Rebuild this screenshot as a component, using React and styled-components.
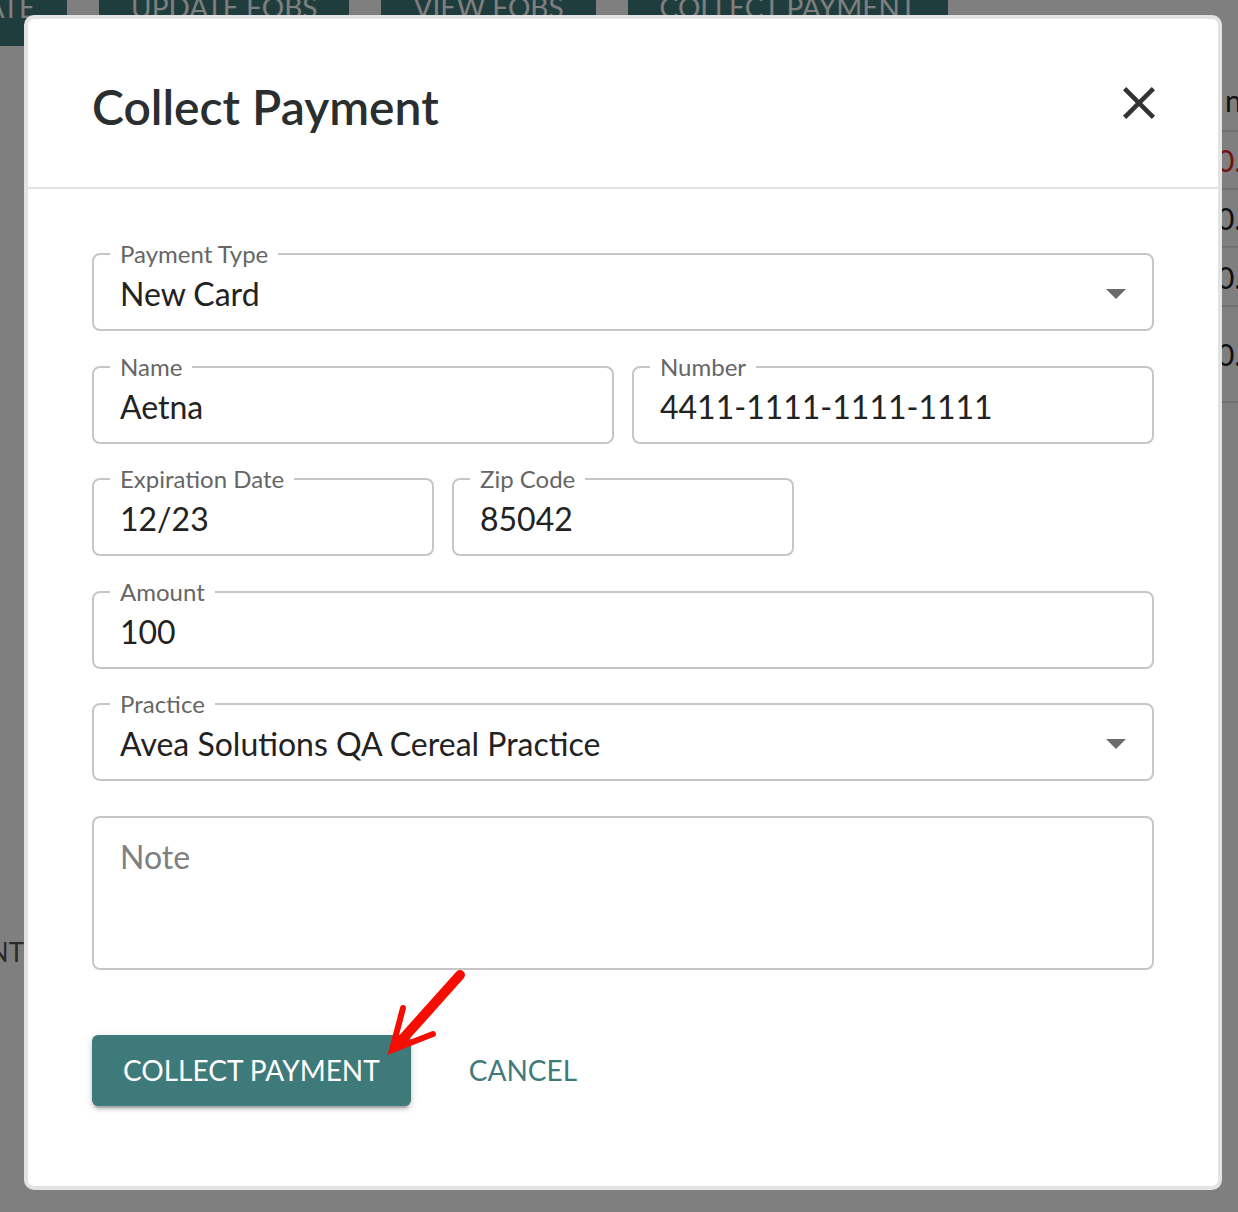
import React from "react";
import styled, { createGlobalStyle } from "styled-components";

const GlobalStyle = createGlobalStyle`
  html, body { margin: 0; padding: 0; }
  body {
    font-family: Lato, "Noto Sans", sans-serif;
    background: #ffffff;
    overflow: hidden;
  }
  * { box-sizing: border-box; }
`;

const Page = styled.div`
  position: relative;
  width: 1238px;
  height: 1212px;
  overflow: hidden;
  background: #ffffff;
`;

const Toolbar = styled.div`
  display: flex;
  gap: 32px;
  margin-top: -18px;
  margin-left: -163px;
`;

const ToolButton = styled.div`
  flex: none;
  height: 64px;
  padding: 0 32px 14px;
  display: flex;
  align-items: center;
  background: #3e7a7a;
  color: #ffffff;
  font-size: 28px;
  border-radius: 6px;
  white-space: nowrap;
`;

const PageBody = styled.div`
  display: flex;
  justify-content: space-between;
`;

const LeftStrip = styled.div`
  width: 24px;
  padding-top: 890px;
  display: flex;
  justify-content: flex-end;
  font-size: 26px;
  line-height: 32px;
  color: #555;
  white-space: nowrap;
`;

const RightTable = styled.div`
  width: 21px;
  margin-top: 24px;
`;

const TableRow = styled.div`
  height: ${(p) => p.$h}px;
  display: flex;
  align-items: center;
  padding-left: ${(p) => (p.$head ? 8 : 0)}px;
  white-space: nowrap;
  font-size: 30px;
  color: ${(p) => (p.$red ? "#e0261c" : "#222")};
  border-bottom: 2px solid #e0e0e0;
`;

const Overlay = styled.div`
  position: absolute;
  inset: 0;
  background: rgba(0, 0, 0, 0.5);
`;

const Modal = styled.div`
  position: absolute;
  left: 24px;
  top: 15px;
  width: 1198px;
  height: 1175px;
  background: #ffffff;
  border: 4px solid #e3e3e3;
  border-radius: 10px;
  display: flex;
  flex-direction: column;
`;

const Header = styled.header`
  flex: none;
  height: 170px;
  border-bottom: 2px solid #e2e2e2;
  display: flex;
  align-items: center;
  justify-content: space-between;
  padding: 0 63px 0 64px;
`;

const Title = styled.h2`
  margin: 0;
  padding-top: 6px;
  font-size: 48px;
  font-weight: 600;
  color: #2a2e2e;
`;

const CloseButton = styled.button`
  border: none;
  background: none;
  padding: 0;
  width: 32px;
  height: 32px;
  display: flex;
  color: #333;
  cursor: pointer;
`;

const Body = styled.div`
  padding: 53px 64px 0;
`;

const FormGrid = styled.div`
  display: grid;
  grid-template-columns: repeat(6, 1fr);
  column-gap: 18px;
  row-gap: 23.6px;
`;

const Field = styled.fieldset`
  grid-column: span ${(p) => p.$span};
  min-width: 0;
  margin: 0;
  padding: 0 26px 8px;
  border: 2px solid #c6c6c6;
  border-radius: 8px;
`;

const Legend = styled.legend`
  padding: 0 10px;
  margin-left: -10px;
  font-size: 24px;
  line-height: 24px;
  color: #666;
`;

const ValueInput = styled.input`
  display: block;
  width: 100%;
  height: 55px;
  border: none;
  outline: none;
  padding: 0;
  background: transparent;
  font-family: Lato, "Noto Sans", sans-serif;
  font-size: 32px;
  color: #222;
`;

const SelectValue = styled.div`
  height: 55px;
  display: flex;
  align-items: center;
  justify-content: space-between;
  font-size: 32px;
  color: #222;
`;

const NoteArea = styled.textarea`
  grid-column: span 6;
  display: block;
  margin-top: 11px;
  height: 154px;
  resize: none;
  padding: 20px 26px;
  border: 2px solid #c6c6c6;
  border-radius: 8px;
  font-family: Lato, "Noto Sans", sans-serif;
  font-size: 32px;
  line-height: 38px;
  color: #222;
  outline: none;
  &::placeholder { color: #808080; }
`;

const Actions = styled.div`
  display: flex;
  align-items: center;
  gap: 42px;
  margin-top: 65px;
`;

const PrimaryButton = styled.button`
  height: 71px;
  padding: 0 31px;
  border: none;
  border-radius: 6px;
  background: #3f7a7a;
  color: #ffffff;
  font-family: Lato, "Noto Sans", sans-serif;
  font-size: 28px;
  box-shadow: 0 5px 2px -3px rgba(0,0,0,0.2), 0 3px 4px 0 rgba(0,0,0,0.14), 0 2px 9px 0 rgba(0,0,0,0.12);
  cursor: pointer;
`;

const TextButton = styled.button`
  height: 71px;
  padding: 0 16px;
  border: none;
  background: none;
  color: #3f7a7a;
  font-family: Lato, "Noto Sans", sans-serif;
  font-size: 28px;
  cursor: pointer;
`;

const Annotation = styled.svg`
  position: absolute;
  left: 352px;
  top: 941px;
  pointer-events: none;
`;

const Caret = () => (
  <svg width="20" height="10" viewBox="0 0 20 10">
    <polygon points="0,0 20,0 10,10" fill="#6b6b6b" />
  </svg>
);

const SelectField = ({ label, value, span }) => (
  <Field $span={span}>
    <Legend>{label}</Legend>
    <SelectValue>
      <span>{value}</span>
      <Caret />
    </SelectValue>
  </Field>
);

const TextField = ({ label, value, span }) => (
  <Field $span={span}>
    <Legend>{label}</Legend>
    <ValueInput readOnly value={value} />
  </Field>
);

export default function App() {
  return (
    <>
      <GlobalStyle />
      <Page>
        <Toolbar>
          <ToolButton>DEACTIVATE</ToolButton>
          <ToolButton>UPDATE FOBS</ToolButton>
          <ToolButton>VIEW FOBS</ToolButton>
          <ToolButton>COLLECT PAYMENT</ToolButton>
        </Toolbar>
        <PageBody>
          <LeftStrip>PAYMENT</LeftStrip>
          <RightTable>
            <TableRow $h={62} $head>n</TableRow>
            <TableRow $h={58} $red>0.00</TableRow>
            <TableRow $h={58}>0.00</TableRow>
            <TableRow $h={59}>0.00</TableRow>
            <TableRow $h={96}>0.00</TableRow>
          </RightTable>
        </PageBody>
        <Overlay />
        <Modal role="dialog">
          <Header>
            <Title>Collect Payment</Title>
            <CloseButton aria-label="close">
              <svg width="32" height="32" viewBox="5 5 14 14">
                <path
                  fill="currentColor"
                  d="M19 6.41 17.59 5 12 10.59 6.41 5 5 6.41 10.59 12 5 17.59 6.41 19 12 13.41 17.59 19 19 17.59 13.41 12z"
                />
              </svg>
            </CloseButton>
          </Header>
          <Body>
            <FormGrid>
              <SelectField span={6} label="Payment Type" value="New Card" />
              <TextField span={3} label="Name" value="Aetna" />
              <TextField span={3} label="Number" value="4411-1111-1111-1111" />
              <TextField span={2} label="Expiration Date" value="12/23" />
              <TextField span={2} label="Zip Code" value="85042" />
              <TextField span={6} label="Amount" value="100" />
              <SelectField span={6} label="Practice" value="Avea Solutions QA Cereal Practice" />
              <NoteArea placeholder="Note" />
            </FormGrid>
            <Actions>
              <PrimaryButton>COLLECT PAYMENT</PrimaryButton>
              <TextButton>CANCEL</TextButton>
            </Actions>
          </Body>
          <Annotation width="100" height="100" viewBox="0 0 100 100">
            <line x1="80" y1="15" x2="20" y2="82" stroke="#f50d00" strokeWidth="10" strokeLinecap="round" />
            <polyline
              points="23,48 12,90 53,74"
              fill="none"
              stroke="#f50d00"
              strokeWidth="6"
              strokeLinejoin="miter"
              strokeLinecap="round"
            />
          </Annotation>
        </Modal>
      </Page>
    </>
  );
}
